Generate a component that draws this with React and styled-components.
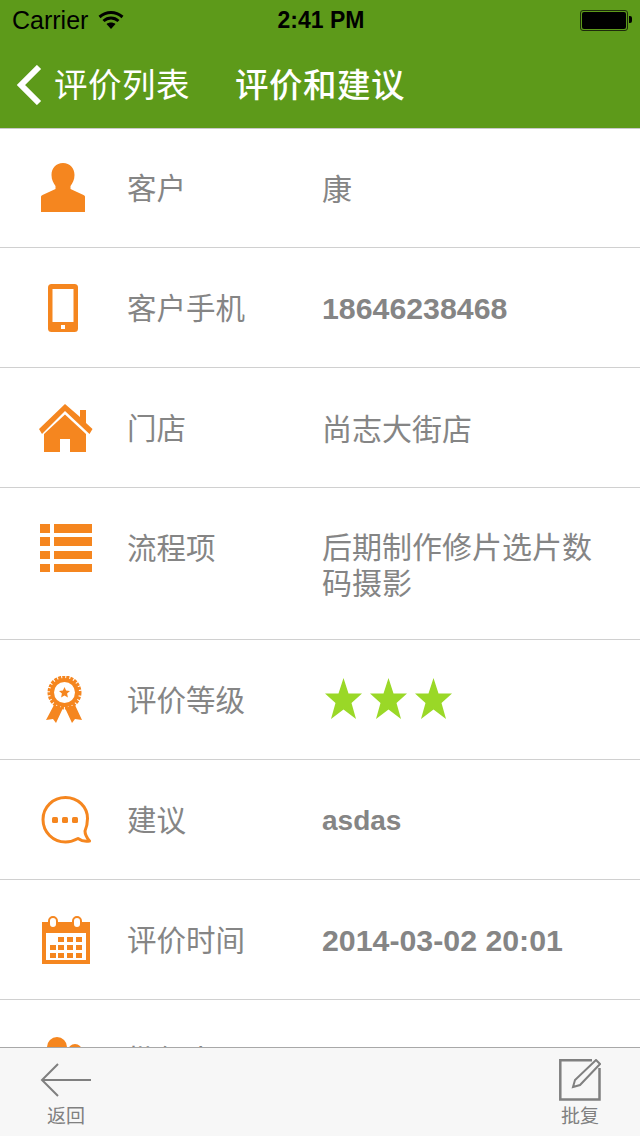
import React from "react";
import styled, { createGlobalStyle } from "styled-components";

const ORANGE = "#f5861f";
const GREY = "#808080";

const GlobalStyle = createGlobalStyle`
  html, body {
    margin: 0;
    padding: 0;
    background: #fff;
  }
  body {
    font-family: "Liberation Sans", "Noto Sans CJK SC", sans-serif;
  }
`;

const PersonIcon = () => (
  <svg width="52" height="50" viewBox="0 0 52 50">
    <path fill={ORANGE} d="M23 0c7 0 11.500 5 11.500 12 0 5-2 8-4 11v3l13 6c1 .5 1.500 1 1.500 2v15H1V34c0-1 .5-1.500 1.500-2l13-6v-3c-2-3-4-6-4-11C11.500 5 16 0 23 0z" />
  </svg>
);

const PhoneIcon = () => (
  <svg width="37" height="48" viewBox="0 0 37 48">
    <rect x="0" y="0" width="30" height="48" rx="3.500" fill={ORANGE} />
    <rect x="4.500" y="5" width="21" height="33" fill="#fff" />
    <rect x="13" y="41" width="4" height="4" fill="#fff" />
  </svg>
);

const HomeIcon = () => (
  <svg width="54" height="50" viewBox="0 0 54 50">
    <path fill={ORANGE} d="M26 1l15 13V7h6v13l6.500 6-3 5L26 8 3 31l-3-5z" />
    <path fill={ORANGE} d="M26 11.500L47 31v18H31V36H21v13H5V31z" />
  </svg>
);

const ListIcon = () => (
  <svg width="52" height="48" viewBox="0 0 52 48">
    <g fill={ORANGE}>
      <rect x="0" y="0" width="10" height="9" />
      <rect x="14" y="0" width="38" height="9" />
      <rect x="0" y="13" width="10" height="9" />
      <rect x="14" y="13" width="38" height="9" />
      <rect x="0" y="27" width="10" height="8" />
      <rect x="14" y="27" width="38" height="8" />
      <rect x="0" y="40" width="10" height="8" />
      <rect x="14" y="40" width="38" height="8" />
    </g>
  </svg>
);

const AwardIcon = () => (
  <svg width="42" height="48" viewBox="0 0 42 48">
    <path fill={ORANGE} d="M9 29L1 44l7-1 3 4 7-15zM30 29l7 15-7-1-3 4-7-15z" />
    <circle cx="19.500" cy="16.500" r="15" fill="none" stroke={ORANGE} strokeWidth="4" strokeDasharray="3 1" />
    <circle cx="19.500" cy="16.500" r="14.500" fill={ORANGE} />
    <circle cx="19.500" cy="16.500" r="10.500" fill="#fff" />
    <path fill={ORANGE} d="M19.500 11l1.600 3.500 3.900.4-2.900 2.700.8 3.800-3.400-2-3.400 2 .8-3.800-2.900-2.700 3.900-.4z" />
  </svg>
);

const ChatIcon = () => (
  <svg width="50" height="48" viewBox="0 0 50 48">
    <path fill="none" stroke={ORANGE} strokeWidth="3" strokeLinejoin="round" d="M24.500 1.500c12.500 0 22 9.500 22 21 0 5-1 9-2.500 12.500 0 3 2 7 4.500 10-4 .8-8 0-11.500-2.500-3.500 2-7.500 3.500-12.500 3.500-12.500 0-22.500-10-22.500-22.500S12 1.500 24.500 1.500z" />
    <g fill={ORANGE}>
      <rect x="11" y="21" width="6" height="6" rx="1.500" />
      <rect x="21" y="21" width="6" height="6" rx="1.500" />
      <rect x="31" y="21" width="6" height="6" rx="1.500" />
    </g>
  </svg>
);

const CalendarIcon = () => {
  const cells = [
    [16, 21], [25, 21], [34, 21],
    [8, 29], [16, 29], [25, 29], [34, 29],
    [8, 37], [16, 37], [25, 37], [34, 37],
  ];
  return (
    <svg width="48" height="48" viewBox="0 0 48 48">
      <path fill={ORANGE} fillRule="evenodd" d="M0 6h48v42H0zM4 17v27h40V17z" />
      <rect x="7" y="1" width="8" height="11" rx="4" fill="#fff" stroke={ORANGE} strokeWidth="2" />
      <rect x="31" y="1" width="8" height="11" rx="4" fill="#fff" stroke={ORANGE} strokeWidth="2" />
      <g fill={ORANGE}>
        {cells.map(([x, y]) => (
          <rect key={`${x}-${y}`} x={x} y={y} width="6" height="5" />
        ))}
      </g>
    </svg>
  );
};

const GroupIcon = () => (
  <svg width="52" height="48" viewBox="0 0 52 48">
    <circle cx="17" cy="11" r="10" fill={ORANGE} />
    <circle cx="35" cy="15" r="7" fill={ORANGE} />
  </svg>
);

const Star = () => (
  <svg width="37" height="41" viewBox="0 0 37 41">
    <path fill="#9ad827" d="M18.500 0l5 15.500H37L26.500 25 31 41 18.500 31.500 6 41l4.500-16L0 15.500h13.500z" />
  </svg>
);

const rows = [
  { icon: <PersonIcon />, label: "客户", value: "康" },
  { icon: <PhoneIcon />, label: "客户手机", value: "18646238468", latin: true, size: 30.3 },
  { icon: <HomeIcon />, label: "门店", value: "尚志大街店" },
  { icon: <ListIcon />, label: "流程项", value: "后期制作修片选片数码摄影", tall: true },
  { icon: <AwardIcon />, label: "评价等级", stars: 3 },
  { icon: <ChatIcon />, label: "建议", value: "asdas", latin: true, size: 28 },
  { icon: <CalendarIcon />, label: "评价时间", value: "2014-03-02 20:01", latin: true, size: 30.3 },
  { icon: <GroupIcon />, label: "批复人", value: "" },
];

export default function App() {
  return (
    <Screen>
      <GlobalStyle />
      <Header>
        <StatusBar>
          <StatusLeft>
            <Carrier>Carrier</Carrier>
            <svg width="26" height="20" viewBox="0 0 26 20">
              <path fill="none" stroke="#000" strokeWidth="3" d="M1.500 7c7-6 16-6 23 0M5.500 11c4.500-4 10.500-4 15 0" />
              <path fill="#000" d="M13 19l-4.500-5c2.500-2 6.500-2 9 0z" />
            </svg>
          </StatusLeft>
          <Clock>2:41 PM</Clock>
          <Battery>
            <BatteryFill />
          </Battery>
        </StatusBar>
        <NavBar>
          <BackChevron width="26" height="40" viewBox="0 0 26 40">
            <path fill="none" stroke="#fff" strokeWidth="6" d="M23 2L5 20l18 18" />
          </BackChevron>
          <BackLabel>评价列表</BackLabel>
          <NavTitle>评价和建议</NavTitle>
        </NavBar>
      </Header>
      <List>
        {rows.map((row) => (
          <Row key={row.label} $tall={row.tall}>
            <IconCell>{row.icon}</IconCell>
            <Label>{row.label}</Label>
            {row.stars ? (
              <Stars>
                {Array.from({ length: row.stars }, (_, i) => (
                  <Star key={i} />
                ))}
              </Stars>
            ) : (
              <Value $latin={row.latin} $size={row.size} $tall={row.tall}>
                {row.value}
              </Value>
            )}
          </Row>
        ))}
      </List>
      <TabBar>
        <TabButton>
          <TabIcon>
            <svg width="52" height="36" viewBox="0 0 52 36">
              <path fill="none" stroke={GREY} strokeWidth="2" d="M51 18H2M18 2L2 18l16 16" />
            </svg>
          </TabIcon>
          <TabLabel>返回</TabLabel>
        </TabButton>
        <TabButton>
          <TabIcon>
            <svg width="42" height="42" viewBox="0 0 42 42">
              <path fill="none" stroke={GREY} strokeWidth="2.500" d="M33 1.300H1.300V40.500H40.500V9" />
              <path fill="none" stroke={GREY} strokeWidth="2" d="M37 1l4 4-20 21-7 2 2-7z" />
            </svg>
          </TabIcon>
          <TabLabel>批复</TabLabel>
        </TabButton>
      </TabBar>
    </Screen>
  );
}

const Screen = styled.div`
  width: 640px;
  height: 1136px;
  display: flex;
  flex-direction: column;
  overflow: hidden;
  background: #fff;
`;

const Header = styled.header`
  height: 128px;
  flex-shrink: 0;
  background: #5d9a1a;
  border-bottom: 1px solid #c9c9c9;
  box-sizing: content-box;
  margin-bottom: -1px;
`;

const StatusBar = styled.div`
  height: 40px;
  padding: 0 12px 0 12px;
  display: flex;
  align-items: center;
  justify-content: space-between;
  color: #000;
`;

const StatusLeft = styled.div`
  width: 180px;
  display: flex;
  align-items: center;
  gap: 10px;
`;

const Carrier = styled.span`
  font-size: 25px;
`;

const Clock = styled.span`
  font-size: 23px;
  font-weight: 700;
  margin-right: 130px;
`;

const Battery = styled.div`
  width: 44px;
  height: 17px;
  padding: 1px;
  border: 1px solid #1e2b0c;
  border-radius: 3px;
  position: relative;
  &::after {
    content: "";
    position: absolute;
    right: -5px;
    top: 5px;
    width: 3px;
    height: 7px;
    background: #000;
    border-radius: 0 2px 2px 0;
  }
`;

const BatteryFill = styled.div`
  height: 100%;
  background: #000;
  border-radius: 2px;
`;

const NavBar = styled.nav`
  height: 88px;
  padding: 0 0 4px 16px;
  box-sizing: border-box;
  display: flex;
  align-items: center;
  color: #fff;
`;

const BackChevron = styled.svg`
  margin-top: 5px;
  flex-shrink: 0;
`;

const BackLabel = styled.span`
  font-size: 33.500px;
  margin-left: 12px;
  letter-spacing: 0.500px;
`;

const NavTitle = styled.span`
  font-size: 33.500px;
  font-weight: 500;
  margin-left: 45px;
  letter-spacing: 0.500px;
`;

const List = styled.main`
  flex: 1;
  min-height: 0;
  overflow: hidden;
`;

const Row = styled.div`
  height: ${(p) => (p.$tall ? 152 : 120)}px;
  box-sizing: border-box;
  padding-top: 36px;
  border-bottom: 1px solid #d0d0d0;
  display: flex;
  align-items: flex-start;
`;

const IconCell = styled.div`
  width: 127px;
  height: 48px;
  padding-left: 5px;
  box-sizing: border-box;
  flex-shrink: 0;
  display: flex;
  align-items: center;
  justify-content: center;
`;

const Label = styled.div`
  width: 195px;
  flex-shrink: 0;
  font-size: 29.500px;
  line-height: 48px;
  padding-top: 1px;
  color: #858585;
`;

const Value = styled.div`
  flex: 1;
  padding-right: 40px;
  font-size: ${(p) => p.$size || 30}px;
  font-weight: ${(p) => (p.$latin ? 700 : 400)};
  line-height: 36px;
  padding-top: ${(p) => (p.$tall ? 6 : p.$latin ? 7 : 8)}px;
  color: #858585;
`;

const Stars = styled.div`
  display: flex;
  gap: 8px;
  padding-top: 2px;
  margin-left: 3px;
`;

const TabBar = styled.footer`
  height: 89px;
  flex-shrink: 0;
  box-sizing: border-box;
  padding: 11px 34px 0 40px;
  background: #f7f7f7;
  border-top: 1px solid #a8a8a8;
  display: flex;
  justify-content: space-between;
`;

const TabButton = styled.div`
  width: 52px;
  display: flex;
  flex-direction: column;
  align-items: center;
  gap: 4px;
`;

const TabIcon = styled.div`
  height: 42px;
  display: flex;
  align-items: center;
  justify-content: center;
`;

const TabLabel = styled.span`
  font-size: 19px;
  line-height: 24px;
  color: ${GREY};
  white-space: nowrap;
`;
